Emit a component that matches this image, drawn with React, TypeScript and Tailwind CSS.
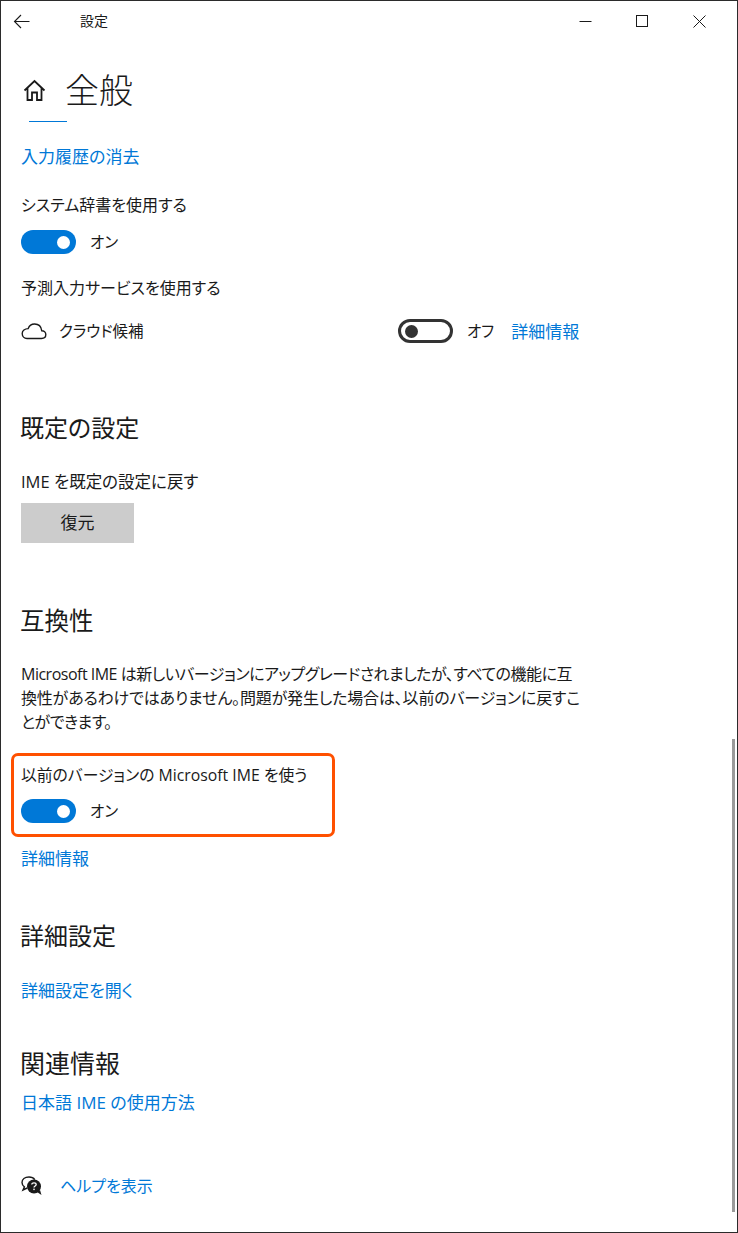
import type { ReactNode } from 'react';

const body = "font-['Open_Sans','Noto_Sans_CJK_JP',sans-serif]";

function Toggle({ on, label }: { on: boolean; label: string }) {
  return (
    <div className="flex items-center h-6">
      {on ? (
        <div className="w-[55px] h-6 rounded-full bg-[#0078d7] flex items-center justify-end pr-[6px]">
          <div className="w-[13px] h-[13px] rounded-full bg-white" />
        </div>
      ) : (
        <div className="w-[55px] h-6 rounded-full border-[3px] border-[#333333] flex items-center pl-[4px]">
          <div className="w-[13px] h-[13px] rounded-full bg-[#333333]" />
        </div>
      )}
      <span className="ml-[14px] h-6 text-[15.5px] leading-[25px]">{label}</span>
    </div>
  );
}

function Heading({ className, children }: { className: string; children: ReactNode }) {
  return <div className={`leading-9 text-[#1a1a1a] ${className}`}>{children}</div>;
}

function Row({ className, children }: { className: string; children: ReactNode }) {
  return <div className={`leading-6 ${className}`}>{children}</div>;
}

function LinkRow({ className, children }: { className: string; children: ReactNode }) {
  return <div className={`h-6 text-[17px] leading-[26px] text-[#0078d7] ${className}`}>{children}</div>;
}

export default function App() {
  return (
    <div className={`relative w-[738px] h-[1233px] bg-white border border-[#2b2b2b] overflow-hidden text-[#1a1a1a] [font-feature-settings:'palt'] ${body}`}>
      <div className="flex items-center h-[41px]">
        <svg className="ml-[12px] w-[17px] h-[15px]" viewBox="0 0 17 15" fill="none" stroke="#1a1a1a" strokeWidth="1.1">
          <path d="M1.5 7.5H16.5M8 1L1.5 7.5L8 14" />
        </svg>
        <span className="ml-[50px] mb-[2px] text-[14px]">設定</span>
        <div className="ml-auto flex items-center pr-[31px] gap-[44px]">
          <svg className="w-[13px] h-[13px]" viewBox="0 0 13 13" fill="none" stroke="#1a1a1a">
            <path d="M0.5 6.5H12.5" />
          </svg>
          <svg className="w-[13px] h-[13px]" viewBox="0 0 13 13" fill="none" stroke="#1a1a1a">
            <rect x="0.5" y="0.5" width="11" height="11" />
          </svg>
          <svg className="w-[13px] h-[13px]" viewBox="0 0 13 13" fill="none" stroke="#1a1a1a">
            <path d="M0.5 0.5L12.5 12.5M12.5 0.5L0.5 12.5" />
          </svg>
        </div>
      </div>

      <div className="pl-5">
        <div className="flex items-center h-12 mt-6">
          <svg className="ml-[2px] w-[23px] h-[23px]" viewBox="0 0 23 23" fill="none" stroke="#1a1a1a" strokeWidth="1.8">
            <path d="M1.5 11.5L11.5 2L21.5 11.5M4.5 9V21H9V13.5H14V21H18.5V9" />
          </svg>
          <span className="ml-[19px] text-[34px] leading-[48px] font-light text-[#1a1a1a]">全般</span>
        </div>
        <div className="mt-[7px] ml-2 w-[38px] h-px bg-[#0078d7]" />

        <LinkRow className="mt-[22px]">入力履歴の消去</LinkRow>
        <Row className="mt-[25px] text-[16px]">システム辞書を使用する</Row>
        <div className="mt-[13px]">
          <Toggle on label="オン" />
        </div>
        <Row className="mt-[22px] text-[16px]">予測入力サービスを使用する</Row>

        <div className="mt-[19px] flex items-center h-6">
          <svg className="w-[26px] h-[18px]" viewBox="0 0 26 18" fill="none" stroke="#1a1a1a" strokeWidth="1.4">
            <path d="M6 16.5H20.5C23 16.5 24.8 14.8 24.8 12.6C24.8 10.4 23 8.8 20.8 8.8C20.2 4.6 17.2 2 13.6 2C10.6 2 8.2 3.8 7.2 6.6C3.8 6.6 1.2 8.6 1.2 11.6C1.2 14.4 3.2 16.5 6 16.5Z" />
          </svg>
          <span className="ml-[12px] w-[339px] text-[15.5px] leading-6">クラウド候補</span>
          <Toggle on={false} label="オフ" />
          <span className="ml-[17px] h-6 text-[17px] leading-[26px] text-[#0078d7]">詳細情報</span>
        </div>

        <Heading className="mt-[67px] -ml-px text-[24px]">既定の設定</Heading>
        <Row className="mt-6 text-[16.5px]">IME を既定の設定に戻す</Row>
        <button className="mt-[9px] block w-[113px] h-10 bg-[#cccccc] text-[17px] text-[#1a1a1a]">復元</button>

        <Heading className="mt-[60px] -ml-px text-[24.5px]">互換性</Heading>
        <div className="mt-[23px] whitespace-nowrap text-[16px] leading-6 tracking-[-0.5px]">
          Microsoft IME は新しいバージョンにアップグレードされましたが、すべての機能に互<br />
          <span className="tracking-[-0.17px]">換性があるわけではありません。問題が発生した場合は、以前のバージョンに戻すこ</span><br />
          とができます。
        </div>

        <div className="mt-[19px] -ml-[10px] w-[324px] h-[84px] border-[3px] border-[#ff5000] rounded-[7px] pl-[7px] pt-[7px]">
          <Row className="text-[15.8px]">以前のバージョンの Microsoft IME を使う</Row>
          <div className="mt-3">
            <Toggle on label="オン" />
          </div>
        </div>

        <LinkRow className="mt-[9px]">詳細情報</LinkRow>

        <Heading className="mt-12 -ml-px text-[24px]">詳細設定</Heading>
        <LinkRow className="mt-6">詳細設定を開く</LinkRow>

        <Heading className="mt-[43px] -ml-px text-[25px]">関連情報</Heading>
        <LinkRow className="mt-[9px]">日本語 IME の使用方法</LinkRow>

        <div className="mt-[60px] flex items-center h-6">
          <svg className="w-[21px] h-[20px]" viewBox="0 0 21 20">
            <path d="M8 1C3.8 1 1 3.4 1 6.6C1 8.4 2 9.9 3.4 10.9L2 14L6.2 12" fill="white" stroke="#1a1a1a" strokeWidth="1.4" />
            <path d="M8 1C10.5 1 12.6 2 13.8 3.6" fill="none" stroke="#1a1a1a" strokeWidth="1.4" />
            <circle cx="13" cy="10.5" r="7" fill="#1a1a1a" />
            <path d="M16 16L20.5 19L19 14Z" fill="#1a1a1a" />
            <path d="M10.8 8.6C10.8 7.4 11.8 6.8 13 6.8C14.2 6.8 15.2 7.5 15.2 8.6C15.2 10 13 10 13 11.6" fill="none" stroke="white" strokeWidth="1.3" />
            <rect x="12.3" y="12.6" width="1.4" height="1.5" fill="white" />
          </svg>
          <span className="ml-[18px] text-[16px] leading-6 text-[#0078d7]">ヘルプを表示</span>
        </div>
      </div>

      {/* scrollbar sits over the page */}
      <div className="absolute left-[731px] top-[738px] w-[3px] h-[473px] bg-[#9a9a9a]" />
    </div>
  );
}
